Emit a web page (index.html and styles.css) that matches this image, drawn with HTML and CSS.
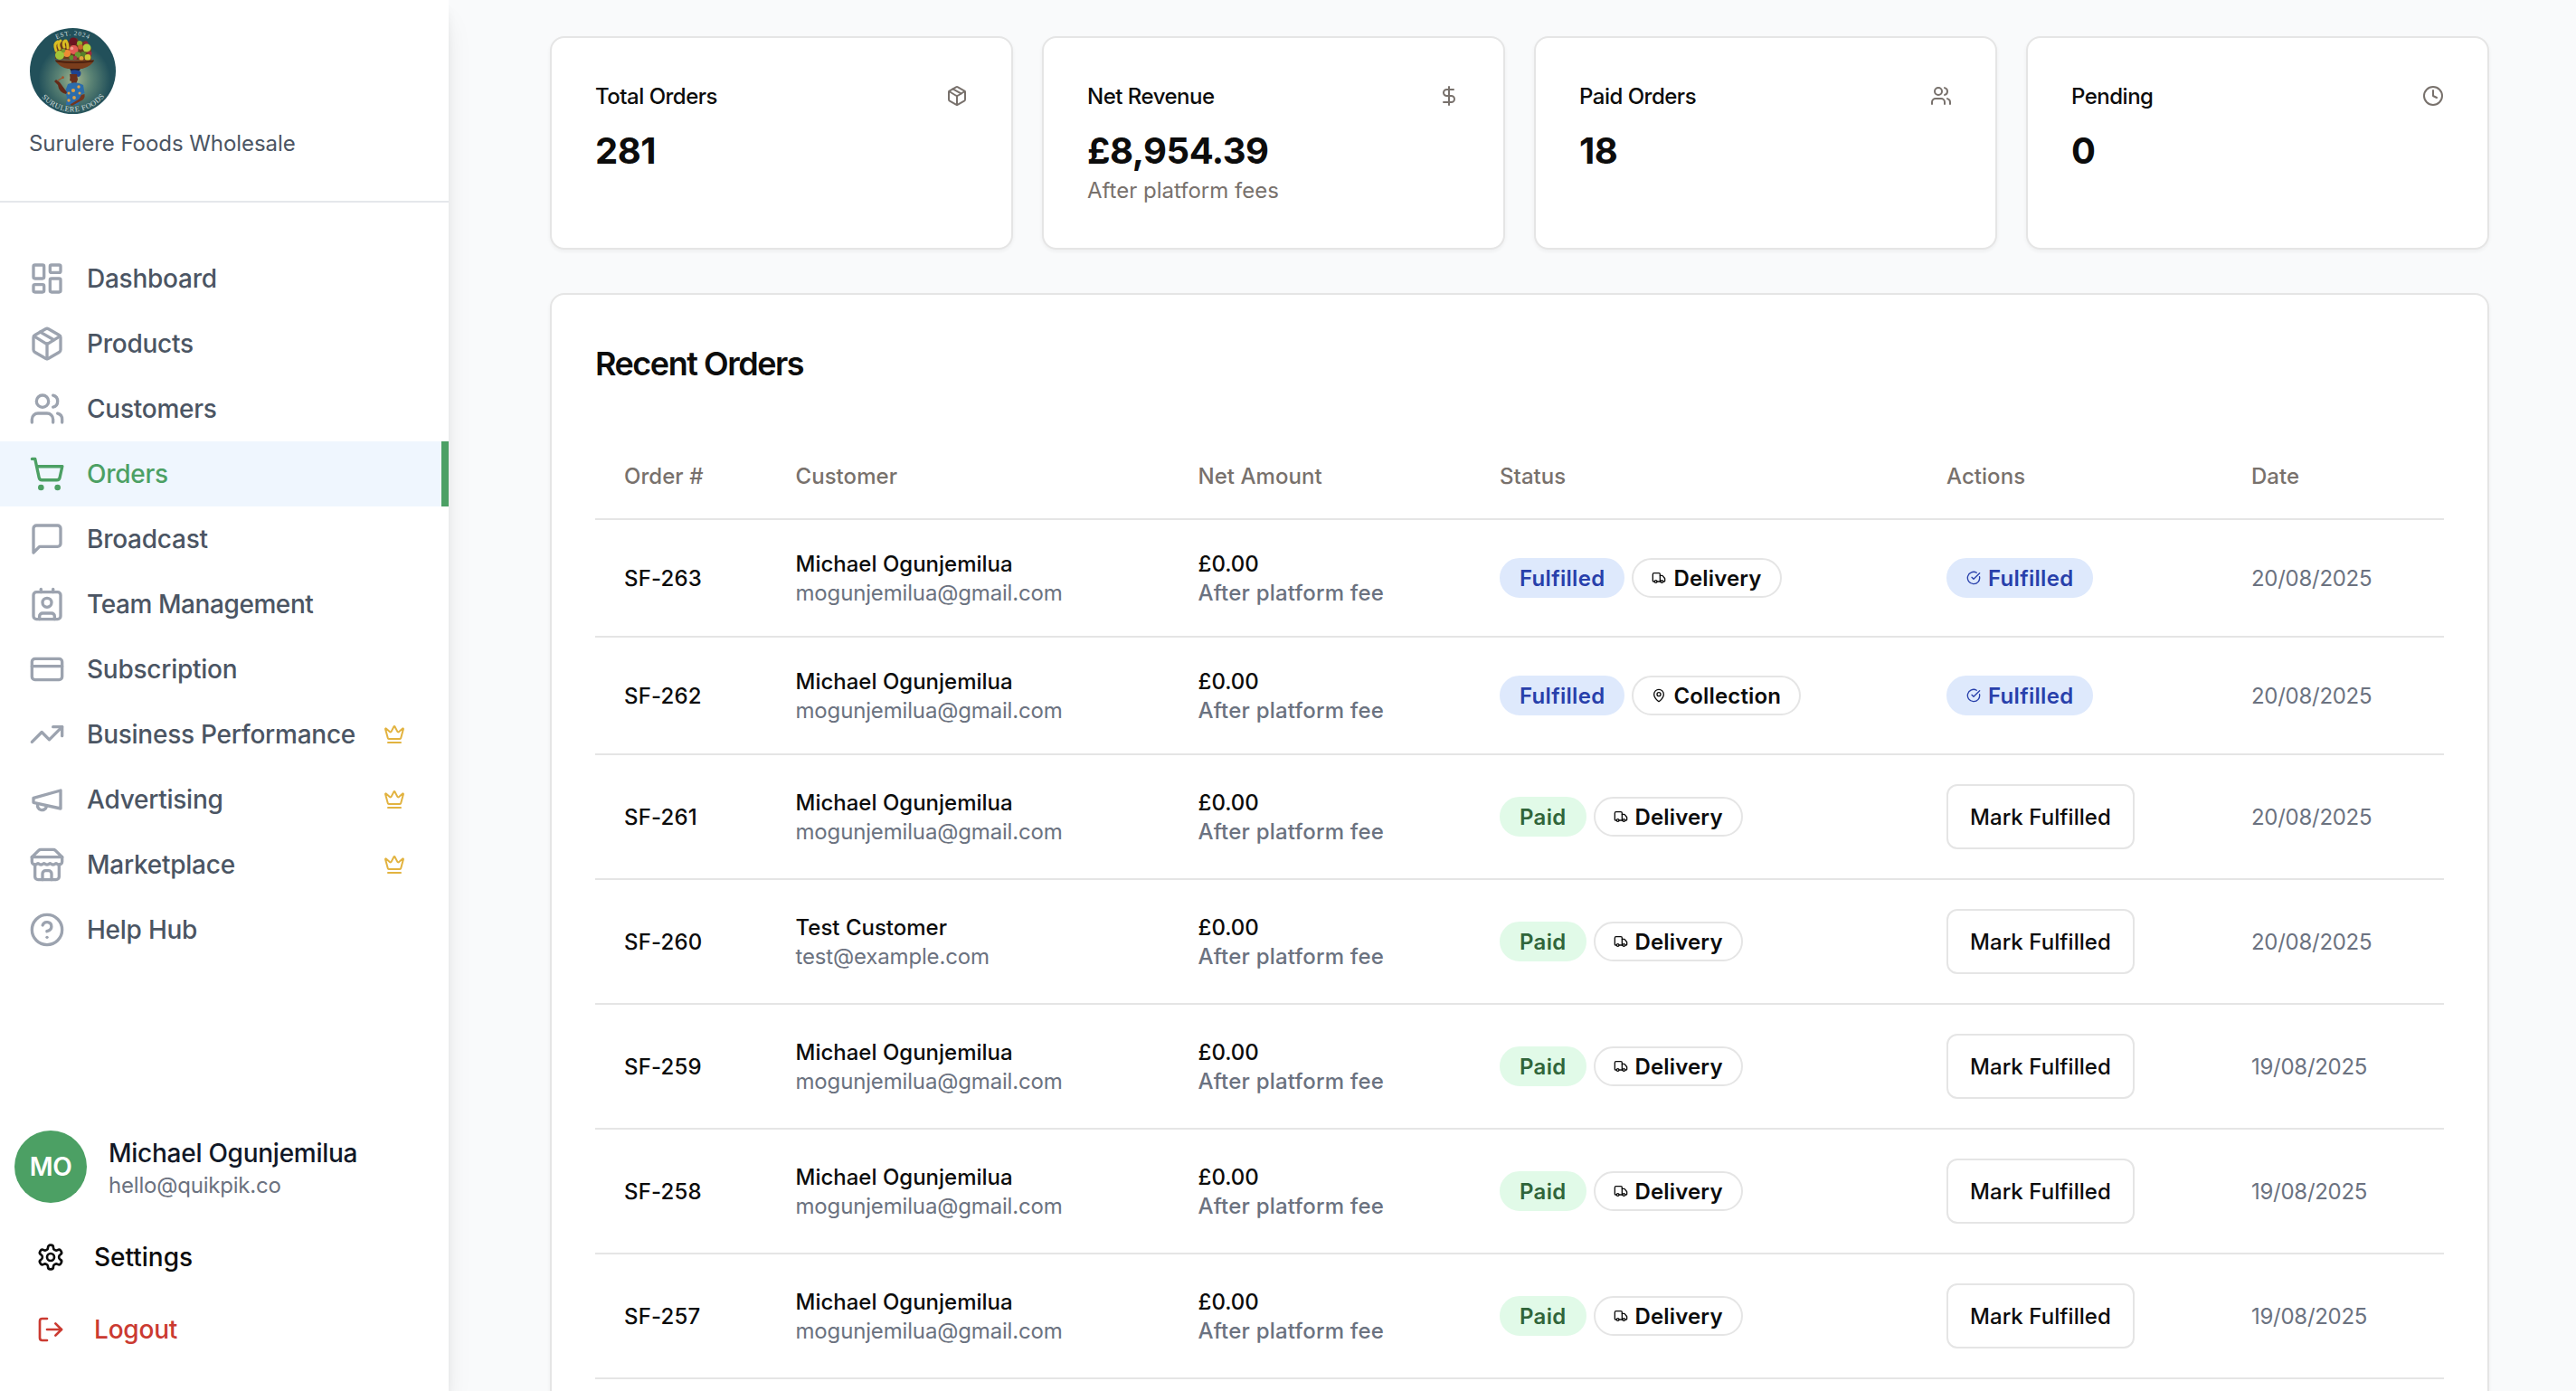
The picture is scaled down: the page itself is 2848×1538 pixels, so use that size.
FILE: index.html
```
<!DOCTYPE html>
<html lang="en">
<head>
<meta charset="utf-8">
<title>Orders</title>
<link rel="stylesheet" href="styles.css">
</head>
<body>
<svg class="sprite" aria-hidden="true">
  <symbol id="dashboard" viewBox="0 0 24 24"><rect x="3" y="3" width="7" height="9" rx="1"/><rect x="14" y="3" width="7" height="5" rx="1"/><rect x="14" y="12" width="7" height="9" rx="1"/><rect x="3" y="16" width="7" height="5" rx="1"/></symbol>
  <symbol id="package" viewBox="0 0 24 24"><path d="M11 21.73a2 2 0 0 0 2 0l7-4A2 2 0 0 0 21 16V8a2 2 0 0 0-1-1.73l-7-4a2 2 0 0 0-2 0l-7 4A2 2 0 0 0 3 8v8a2 2 0 0 0 1 1.73z"/><path d="M12 22V12"/><path d="m3.3 7 7.703 4.734a2 2 0 0 0 1.994 0L20.7 7"/><path d="m7.5 4.27 9 5.15"/></symbol>
  <symbol id="users" viewBox="0 0 24 24"><path d="M16 21v-2a4 4 0 0 0-4-4H6a4 4 0 0 0-4 4v2"/><circle cx="9" cy="7" r="4"/><path d="M22 21v-2a4 4 0 0 0-3-3.87"/><path d="M16 3.13a4 4 0 0 1 0 7.75"/></symbol>
  <symbol id="cart" viewBox="0 0 24 24"><circle cx="8" cy="21" r="1"/><circle cx="19" cy="21" r="1"/><path d="M2.05 2.05h2l2.66 12.42a2 2 0 0 0 2 1.58h9.78a2 2 0 0 0 1.95-1.57l1.65-7.43H5.12"/></symbol>
  <symbol id="message" viewBox="0 0 24 24"><path d="M21 15a2 2 0 0 1-2 2H7l-4 4V5a2 2 0 0 1 2-2h14a2 2 0 0 1 2 2z"/></symbol>
  <symbol id="contact" viewBox="0 0 24 24"><path d="M16 2v2"/><path d="M7 22v-2a2 2 0 0 1 2-2h6a2 2 0 0 1 2 2v2"/><path d="M8 2v2"/><circle cx="12" cy="11" r="3"/><rect x="3" y="4" width="18" height="18" rx="2"/></symbol>
  <symbol id="card" viewBox="0 0 24 24"><rect x="2" y="5" width="20" height="14" rx="2"/><path d="M2 10h20"/></symbol>
  <symbol id="trend" viewBox="0 0 24 24"><path d="M22 7l-8.5 8.5-5-5L2 17"/><path d="M16 7h6v6"/></symbol>
  <symbol id="megaphone" viewBox="0 0 24 24"><path d="m3 11 18-5v12L3 14v-3z"/><path d="M11.6 16.8a3 3 0 1 1-5.8-1.6"/></symbol>
  <symbol id="store" viewBox="0 0 24 24"><path d="m2 7 4.41-4.41A2 2 0 0 1 7.83 2h8.34a2 2 0 0 1 1.42.59L22 7"/><path d="M4 12v8a2 2 0 0 0 2 2h12a2 2 0 0 0 2-2v-8"/><path d="M15 22v-4a2 2 0 0 0-2-2h-2a2 2 0 0 0-2 2v4"/><path d="M2 7h20"/><path d="M22 7v3a2 2 0 0 1-2 2a2.7 2.7 0 0 1-1.59-.63.7.7 0 0 0-.82 0A2.7 2.7 0 0 1 16 12a2.7 2.7 0 0 1-1.59-.63.7.7 0 0 0-.82 0A2.7 2.7 0 0 1 12 12a2.7 2.7 0 0 1-1.59-.63.7.7 0 0 0-.82 0A2.7 2.7 0 0 1 8 12a2.7 2.7 0 0 1-1.59-.63.7.7 0 0 0-.82 0A2.7 2.7 0 0 1 4 12a2 2 0 0 1-2-2V7"/></symbol>
  <symbol id="help" viewBox="0 0 24 24"><circle cx="12" cy="12" r="10"/><path d="M9.09 9a3 3 0 0 1 5.83 1c0 2-3 3-3 3"/><path d="M12 17h.01"/></symbol>
  <symbol id="crown" viewBox="0 0 24 24"><path d="M11.562 3.266a.5.5 0 0 1 .876 0L15.39 8.87a1 1 0 0 0 1.516.294L21.183 5.5a.5.5 0 0 1 .798.519l-2.834 10.246a1 1 0 0 1-.956.734H5.81a1 1 0 0 1-.957-.734L2.02 6.02a.5.5 0 0 1 .798-.519l4.276 3.664a1 1 0 0 0 1.516-.294z"/><path d="M5 21h14"/></symbol>
  <symbol id="gear" viewBox="0 0 24 24"><path d="M12.22 2h-.44a2 2 0 0 0-2 2v.18a2 2 0 0 1-1 1.73l-.43.25a2 2 0 0 1-2 0l-.15-.08a2 2 0 0 0-2.73.73l-.22.38a2 2 0 0 0 .73 2.73l.15.1a2 2 0 0 1 1 1.72v.51a2 2 0 0 1-1 1.74l-.15.09a2 2 0 0 0-.73 2.73l.22.38a2 2 0 0 0 2.73.73l.15-.08a2 2 0 0 1 2 0l.43.25a2 2 0 0 1 1 1.73V20a2 2 0 0 0 2 2h.44a2 2 0 0 0 2-2v-.18a2 2 0 0 1 1-1.73l.43-.25a2 2 0 0 1 2 0l.15.08a2 2 0 0 0 2.73-.73l.22-.39a2 2 0 0 0-.73-2.73l-.15-.08a2 2 0 0 1-1-1.74v-.5a2 2 0 0 1 1-1.74l.15-.09a2 2 0 0 0 .73-2.73l-.22-.38a2 2 0 0 0-2.73-.73l-.15.08a2 2 0 0 1-2 0l-.43-.25a2 2 0 0 1-1-1.73V4a2 2 0 0 0-2-2z"/><circle cx="12" cy="12" r="3"/></symbol>
  <symbol id="logout" viewBox="0 0 24 24"><path d="M9 21H5a2 2 0 0 1-2-2V5a2 2 0 0 1 2-2h4"/><path d="m16 17 5-5-5-5"/><path d="M21 12H9"/></symbol>
  <symbol id="dollar" viewBox="0 0 24 24"><path d="M12 2v20"/><path d="M17 5H9.5a3.5 3.5 0 0 0 0 7h5a3.5 3.5 0 0 1 0 7H6"/></symbol>
  <symbol id="clock" viewBox="0 0 24 24"><circle cx="12" cy="12" r="10"/><path d="M12 6v6l4 2"/></symbol>
  <symbol id="truck" viewBox="0 0 24 24"><path d="M14 18V6a2 2 0 0 0-2-2H4a2 2 0 0 0-2 2v11a1 1 0 0 0 1 1h2"/><path d="M15 18H9"/><path d="M19 18h2a1 1 0 0 0 1-1v-3.65a1 1 0 0 0-.22-.624l-3.48-4.35A1 1 0 0 0 17.52 8H14"/><circle cx="17" cy="18" r="2"/><circle cx="7" cy="18" r="2"/></symbol>
  <symbol id="pin" viewBox="0 0 24 24"><path d="M20 10c0 4.993-5.539 10.193-7.399 11.799a1 1 0 0 1-1.202 0C9.539 20.193 4 14.993 4 10a8 8 0 0 1 16 0"/><circle cx="12" cy="10" r="3"/></symbol>
  <symbol id="check" viewBox="0 0 24 24"><path d="M21.801 10A10 10 0 1 1 17 3.335"/><path d="m9 11 3 3L22 4"/></symbol>
</svg>

<div class="app">
  <aside class="sidebar">
    <header class="brand">
      <svg class="logo" viewBox="0 0 95 95">
        <defs>
          <radialGradient id="glow" cx=".52" cy=".6" r=".42"><stop offset="0" stop-color="#a3b48c"/><stop offset=".45" stop-color="#5c8475"/><stop offset="1" stop-color="#22505a"/></radialGradient>
          <path id="arc-top" d="M8 47.5a39.500 39.500 0 0 1 79 0"/>
          <path id="arc-bottom" d="M2.500 47.500a45 45 0 0 0 90 0"/>
        </defs>
        <circle cx="47.500" cy="47.500" r="47.500" fill="url(#glow)"/>
        <text class="logo-text logo-text-top"><textPath href="#arc-top" startOffset="50%">EST. 2024</textPath></text>
        <!-- fruit basket -->
        <path d="M28 34V20l3-6 3 2 3-3 3 3 4-2 8-3 3 5 7-2 3 5 3 4v13z" fill="#6b3a1e"/>
        <path d="M29 25q-3-8 2-10M33 23q-3-6 1-9M38 21q-2-5 1-7M42 22q0-5-2-8" fill="none" stroke="#d9bd22" stroke-width="3" stroke-linecap="round"/>
        <circle cx="48" cy="15" r="4.500" fill="#6c1420"/><circle cx="55" cy="17" r="3" fill="#8bae2c"/><circle cx="62" cy="17" r="2.500" fill="#8d2437"/>
        <circle cx="63" cy="22" r="4.500" fill="#b3cf39"/><circle cx="56" cy="21" r="2.800" fill="#c9662a"/>
        <circle cx="48.500" cy="24" r="5" fill="#e25a55"/><circle cx="46.500" cy="22.500" r="1.800" fill="#f09a8c"/><circle cx="41" cy="28" r="4" fill="#ef8b35"/>
        <circle cx="33" cy="30" r="5" fill="#a2c63a"/><circle cx="53" cy="29.500" r="3.200" fill="#6b9b30"/><circle cx="59" cy="29" r="3" fill="#58802a"/>
        <circle cx="66" cy="28" r="2.500" fill="#9b2c3d"/><circle cx="64" cy="32.500" r="3.400" fill="#d0ce35"/><circle cx="46" cy="32.500" r="2.600" fill="#5d8f2b"/>
        <circle cx="50" cy="33" r="2.200" fill="#a4344a"/><circle cx="57" cy="33.500" r="2.500" fill="#dfa33a"/><circle cx="37" cy="25" r="2.300" fill="#7d9a2d"/>
        <path d="M28 35.500h43q-3 7-13 9.500H42q-10-2-14-9.500z" fill="#7a3d1c"/><path d="M28 35.500q21 3.500 43 0l-1 2q-21 3-41 0z" fill="#4a2110"/>
        <!-- woman carrying it -->
        <path d="M44 45h12l-2 3h-8z" fill="#2b1c1d"/>
        <path d="M45 47q6-2 11 1 1.500 4-2 6l-8-2z" fill="#1d4391"/>
        <path d="M44 51l8 0 1 6-2 5-5-1v-2l-2-1 .5-3z" fill="#6a2f1c"/>
        <path d="M42 62q9-4 17 1l1.500 9-3 1-1 6-3 6H40l1-8-2-7z" fill="#2b6cab"/>
        <path d="M40 73q-8-2-9-10l-4-4 2-2 4 3 8 11z" fill="#632a19"/>
        <path d="M57 74l3.500-1q1 6-5 8l-9 5-2-1.500 10-6z" fill="#72361f"/>
        <path d="M31 58l5-3" stroke="#a2522b" stroke-width="1.200"/><circle cx="36.500" cy="54.700" r="1.400" fill="#a2522b"/>
        <g fill="#e0a043"><circle cx="48" cy="69" r="2.100"/><circle cx="54" cy="65" r="1.700"/><circle cx="43" cy="72" r="1.500"/><circle cx="49" cy="77" r="1.900"/><circle cx="55" cy="72" r="1.500"/><circle cx="43" cy="80" r="1.700"/></g>
        <text class="logo-text logo-text-bottom"><textPath href="#arc-bottom" startOffset="50.500%">SURULERE FOODS</textPath></text>
      </svg>
      <p class="brand-name">Surulere Foods Wholesale</p>
    </header>

    <nav class="nav">
      <a class="nav-item"><svg><use href="#dashboard"/></svg>Dashboard</a>
      <a class="nav-item"><svg><use href="#package"/></svg>Products</a>
      <a class="nav-item"><svg><use href="#users"/></svg>Customers</a>
      <a class="nav-item active"><svg><use href="#cart"/></svg>Orders</a>
      <a class="nav-item"><svg><use href="#message"/></svg>Broadcast</a>
      <a class="nav-item wide"><svg><use href="#contact"/></svg>Team Management</a>
      <a class="nav-item"><svg><use href="#card"/></svg>Subscription</a>
      <a class="nav-item"><svg><use href="#trend"/></svg>Business Performance<svg class="crown"><use href="#crown"/></svg></a>
      <a class="nav-item"><svg><use href="#megaphone"/></svg>Advertising<svg class="crown"><use href="#crown"/></svg></a>
      <a class="nav-item"><svg><use href="#store"/></svg>Marketplace<svg class="crown"><use href="#crown"/></svg></a>
      <a class="nav-item"><svg><use href="#help"/></svg>Help Hub</a>
    </nav>

    <footer class="account">
      <div class="user">
        <div class="avatar">MO</div>
        <div class="user-text">
          <div class="user-name">Michael Ogunjemilua</div>
          <div class="user-mail">hello@quikpik.co</div>
        </div>
      </div>
      <a class="account-link"><svg><use href="#gear"/></svg>Settings</a>
      <a class="account-link logout"><svg><use href="#logout"/></svg>Logout</a>
    </footer>
  </aside>

  <main class="main">
    <section class="stats">
      <article class="stat">
        <div class="stat-head">Total Orders<svg><use href="#package"/></svg></div>
        <div class="stat-value">281</div>
      </article>
      <article class="stat">
        <div class="stat-head">Net Revenue<svg><use href="#dollar"/></svg></div>
        <div class="stat-value">£8,954.39</div>
        <div class="stat-note">After platform fees</div>
      </article>
      <article class="stat">
        <div class="stat-head">Paid Orders<svg><use href="#users"/></svg></div>
        <div class="stat-value">18</div>
      </article>
      <article class="stat">
        <div class="stat-head">Pending<svg><use href="#clock"/></svg></div>
        <div class="stat-value">0</div>
      </article>
    </section>

    <section class="orders">
      <h2 class="orders-title">Recent Orders</h2>
      <div class="row head">
        <div>Order #</div><div>Customer</div><div>Net Amount</div><div>Status</div><div>Actions</div><div>Date</div>
      </div>
      <div class="row">
        <div class="id">SF-263</div>
        <div class="pair"><div class="name">Michael Ogunjemilua</div><div class="mail">mogunjemilua@gmail.com</div></div>
        <div class="pair"><div class="sum">£0.00</div><div class="fee">After platform fee</div></div>
        <div class="badges"><span class="badge blue">Fulfilled</span><span class="badge outline"><svg><use href="#truck"/></svg>Delivery</span></div>
        <div class="badges"><span class="badge blue"><svg><use href="#check"/></svg>Fulfilled</span></div>
        <div class="date">20/08/2025</div>
      </div>
      <div class="row">
        <div class="id">SF-262</div>
        <div class="pair"><div class="name">Michael Ogunjemilua</div><div class="mail">mogunjemilua@gmail.com</div></div>
        <div class="pair"><div class="sum">£0.00</div><div class="fee">After platform fee</div></div>
        <div class="badges"><span class="badge blue">Fulfilled</span><span class="badge outline"><svg><use href="#pin"/></svg>Collection</span></div>
        <div class="badges"><span class="badge blue"><svg><use href="#check"/></svg>Fulfilled</span></div>
        <div class="date">20/08/2025</div>
      </div>
      <div class="row">
        <div class="id">SF-261</div>
        <div class="pair"><div class="name">Michael Ogunjemilua</div><div class="mail">mogunjemilua@gmail.com</div></div>
        <div class="pair"><div class="sum">£0.00</div><div class="fee">After platform fee</div></div>
        <div class="badges"><span class="badge green">Paid</span><span class="badge outline"><svg><use href="#truck"/></svg>Delivery</span></div>
        <div><button class="btn">Mark Fulfilled</button></div>
        <div class="date">20/08/2025</div>
      </div>
      <div class="row">
        <div class="id">SF-260</div>
        <div class="pair"><div class="name">Test Customer</div><div class="mail">test@example.com</div></div>
        <div class="pair"><div class="sum">£0.00</div><div class="fee">After platform fee</div></div>
        <div class="badges"><span class="badge green">Paid</span><span class="badge outline"><svg><use href="#truck"/></svg>Delivery</span></div>
        <div><button class="btn">Mark Fulfilled</button></div>
        <div class="date">20/08/2025</div>
      </div>
      <div class="row">
        <div class="id">SF-259</div>
        <div class="pair"><div class="name">Michael Ogunjemilua</div><div class="mail">mogunjemilua@gmail.com</div></div>
        <div class="pair"><div class="sum">£0.00</div><div class="fee">After platform fee</div></div>
        <div class="badges"><span class="badge green">Paid</span><span class="badge outline"><svg><use href="#truck"/></svg>Delivery</span></div>
        <div><button class="btn">Mark Fulfilled</button></div>
        <div class="date">19/08/2025</div>
      </div>
      <div class="row">
        <div class="id">SF-258</div>
        <div class="pair"><div class="name">Michael Ogunjemilua</div><div class="mail">mogunjemilua@gmail.com</div></div>
        <div class="pair"><div class="sum">£0.00</div><div class="fee">After platform fee</div></div>
        <div class="badges"><span class="badge green">Paid</span><span class="badge outline"><svg><use href="#truck"/></svg>Delivery</span></div>
        <div><button class="btn">Mark Fulfilled</button></div>
        <div class="date">19/08/2025</div>
      </div>
      <div class="row">
        <div class="id">SF-257</div>
        <div class="pair"><div class="name">Michael Ogunjemilua</div><div class="mail">mogunjemilua@gmail.com</div></div>
        <div class="pair"><div class="sum">£0.00</div><div class="fee">After platform fee</div></div>
        <div class="badges"><span class="badge green">Paid</span><span class="badge outline"><svg><use href="#truck"/></svg>Delivery</span></div>
        <div><button class="btn">Mark Fulfilled</button></div>
        <div class="date">19/08/2025</div>
      </div>
    </section>
  </main>
</div>
</body>
</html>
```
FILE: styles.css
```
* { box-sizing: border-box; margin: 0; padding: 0; }

body {
  font-family: Inter, "Liberation Sans", sans-serif;
  font-size: 24px;
  line-height: 32px;
  color: #0c0c0c;
  background: #f9fafb;
  overflow: hidden;
}

svg { fill: none; stroke: currentColor; stroke-width: 2; stroke-linecap: round; stroke-linejoin: round; flex: none; }
.sprite { display: none; }

.app { display: flex; height: 1538px; overflow: hidden; }

/* Sidebar */
.sidebar {
  display: flex;
  flex-direction: column;
  flex: none;
  width: 496px;
  background: #fff;
  box-shadow: 0 20px 30px -6px rgba(0, 0, 0, .1), 0 8px 12px -4px rgba(0, 0, 0, .1);
}
.brand { height: 224px; padding: 31px 32px 0; border-bottom: 2px solid #e5e7eb; }
.logo { display: block; width: 95px; height: 95px; margin-left: 1px; stroke: none; }
.logo-text { font-family: "Liberation Serif", serif; fill: #cfdcdc; text-anchor: middle; }
.logo-text-top { font-size: 7.2px; letter-spacing: .8px; }
.logo-text-bottom { font-size: 8.4px; letter-spacing: .5px; }
.brand-name { margin-top: 17px; color: #4b5563; letter-spacing: -.06px; }

.nav { padding-top: 48px; }
.nav-item {
  display: flex;
  align-items: center;
  gap: 24px;
  height: 72px;
  padding: 0 48px 0 32px;
  font-size: 28px;
  font-weight: 500;
  color: #4b5563;
  letter-spacing: -.25px;
}
.nav-item.wide { letter-spacing: -.42px; }
.nav-item svg { width: 40px; height: 40px; color: #9ca3af; }
.nav-item .crown { width: 24px; height: 24px; margin-left: auto; color: #e2b340; }
.nav-item.active { background: #eff6fe; border-right: 8px solid #4ca064; color: #4ca064; }
.nav-item.active svg { color: #4ca064; }

.account { margin-top: auto; padding: 0 16px 28px; }
.user { display: flex; align-items: center; gap: 24px; margin-bottom: 20px; }
.avatar {
  display: grid;
  place-items: center;
  width: 80px;
  height: 80px;
  border-radius: 50%;
  background: #4ca064;
  color: #fff;
  font-size: 28px;
  font-weight: 600;
  letter-spacing: -.4px;
}
.user-text { padding-top: 1px; }
.user-name { font-size: 28px; line-height: 40px; font-weight: 500; color: #111827; letter-spacing: -.26px; }
.user-mail { color: #6b7280; letter-spacing: -.2px; }
.account-link {
  display: flex;
  align-items: center;
  gap: 32px;
  height: 80px;
  padding-left: 24px;
  font-size: 28px;
  font-weight: 500;
}
.account-link svg { width: 32px; height: 32px; }
.logout { color: #cb3a31; letter-spacing: -.2px; }

/* Main column */
.main { flex: 1; padding: 40px 96px 0 112px; }
.stats { display: grid; grid-template-columns: repeat(4, 1fr); gap: 32px; margin-bottom: 48px; }
.stat, .orders {
  background: #fff;
  border: 2px solid #e5e5e5;
  border-radius: 16px;
  padding: 48px;
  box-shadow: 0 2px 4px rgba(0, 0, 0, .05);
}
.stat { height: 236px; padding-top: 49px; }
.stat-head { display: flex; align-items: center; justify-content: space-between; font-weight: 500; letter-spacing: -.5px; }
.stat-head svg { width: 24px; height: 24px; margin-top: -2px; color: #78716c; }
.stat-value { margin-top: 16px; font-size: 40px; line-height: 56px; font-weight: 700; letter-spacing: -.5px; }
.stat-note { color: #78716c; }

.orders { height: 1260px; }
.orders-title { font-size: 36px; line-height: 56px; font-weight: 600; letter-spacing: -1.48px; margin-bottom: 49px; }

.row {
  display: grid;
  grid-template-columns: 189.500px 445px 333.500px 494px 337px 1fr;
  align-items: center;
  min-height: 130px;
  padding: 32px 0;
  border-bottom: 2px solid #e5e5e5;
}
.row > div { padding-left: 32px; }
.row.head { min-height: 96px; padding: 2px 0 0; color: #78716c; font-weight: 500; letter-spacing: .05px; }
.id, .name, .sum { font-weight: 500; }
.id, .date { padding-top: 2px; }
.pair { margin: 1px 0 -1px; }
.id { letter-spacing: .15px; }
.mail { color: #6b7280; letter-spacing: -.16px; }
.fee { color: #6b7280; font-weight: 500; letter-spacing: .21px; }
.date { color: #6b7280; letter-spacing: -.28px; }

.badges { display: flex; gap: 8px; }
.badge {
  display: inline-flex;
  align-items: center;
  gap: 8px;
  height: 44px;
  padding: 2px 20px 0;
  border: 2px solid transparent;
  border-radius: 22px;
  font-weight: 600;
  letter-spacing: .15px;
}
.badge svg { width: 16px; height: 16px; margin-top: -2px; }
.blue { background: #dee9fc; border-color: #dee9fc; color: #2840ab; letter-spacing: .3px; }
.green { background: #e1fae8; border-color: #e1fae8; color: #30653a; letter-spacing: .3px; }
.outline { border-color: #e5e5e5; }

.btn {
  display: block;
  height: 72px;
  padding: 2px 24px 0;
  border: 2px solid #e5e5e5;
  border-radius: 12px;
  background: #fff;
  color: inherit;
  font: inherit;
  font-weight: 500;
  letter-spacing: .06px;
}
```
